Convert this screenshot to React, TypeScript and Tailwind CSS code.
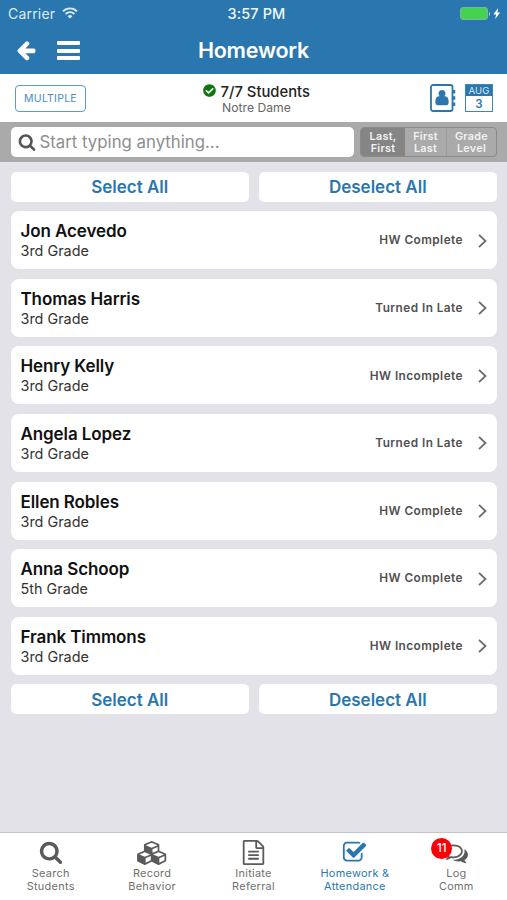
import type { ReactNode } from "react";
import clsx from "clsx";
import { FaCheckCircle } from "react-icons/fa";

const STUDENTS = [
  { name: "Jon Acevedo", grade: "3rd Grade", status: "HW Complete" },
  { name: "Thomas Harris", grade: "3rd Grade", status: "Turned In Late" },
  { name: "Henry Kelly", grade: "3rd Grade", status: "HW Incomplete" },
  { name: "Angela Lopez", grade: "3rd Grade", status: "Turned In Late" },
  { name: "Ellen Robles", grade: "3rd Grade", status: "HW Complete" },
  { name: "Anna Schoop", grade: "5th Grade", status: "HW Complete" },
  { name: "Frank Timmons", grade: "3rd Grade", status: "HW Incomplete" },
];

const SORTS = [
  ["Last,", "First"],
  ["First", "Last"],
  ["Grade", "Level"],
];

const PATHS = {
  back: "M1664 896v128q0 53-32.5 90.5t-84.5 37.5h-704l293 294q38 36 38 90t-38 90l-75 76q-37 37-90 37-52 0-91-37l-651-652q-37-37-37-90 0-52 37-91l651-650q38-38 91-38 52 0 90 38l75 74q38 38 38 91t-38 91l-293 293h704q52 0 84.5 37.5t32.5 90.5z",
  search:
    "M1216 832q0-185-131.5-316.5t-316.5-131.5-316.5 131.5-131.5 316.5 131.5 316.5 316.5 131.5 316.5-131.5 131.5-316.5zm512 832q0 52-38 90t-90 38q-54 0-90-38l-343-342q-179 124-399 124-143 0-273.5-55.5t-225-150-150-225-55.5-273.5 55.5-273.5 150-225 225-150 273.5-55.5 273.5 55.5 225 150 150 225 55.5 273.5q0 220-124 399l343 343q37 37 37 90z",
  cubes:
    "M640 1632l384-192v-314l-384 164v342zm-64-454l404-173-404-173-404 173zm1088 454l384-192v-314l-384 164v342zm-64-454l404-173-404-173-404 173zm-448-293l384-165v-266l-384 164v267zm-64-379l441-189-441-189-441 189zm1088 518v416q0 36-19 67t-52 47l-448 224q-25 14-57 14t-57-14l-448-224q-4-2-7-4-2 2-7 4l-448 224q-25 14-57 14t-57-14l-448-224q-33-16-52-47t-19-67v-416q0-38 21.5-70t56.5-48l434-186v-400q0-38 21.5-70t56.5-48l448-192q23-10 50-10t50 10l448 192q35 16 56.5 48t21.5 70v400l434 186q36 16 57 48t21 70z",
  file: "M1596 380q28 28 48 76t20 88v1152q0 40-28 68t-68 28h-1344q-40 0-68-28t-28-68v-1600q0-40 28-68t68-28h896q40 0 88 20t76 48zm-444-244v376h376q-10-29-22-41l-313-313q-12-12-41-22zm384 1528v-1024h-416q-40 0-68-28t-28-68v-416h-768v1536h1280zm-1024-864q0-14 9-23t23-9h704q14 0 23 9t9 23v64q0 14-9 23t-23 9h-704q-14 0-23-9t-9-23v-64zm736 224q14 0 23 9t9 23v64q0 14-9 23t-23 9h-704q-14 0-23-9t-9-23v-64q0-14 9-23t23-9h704zm0 256q14 0 23 9t9 23v64q0 14-9 23t-23 9h-704q-14 0-23-9t-9-23v-64q0-14 9-23t23-9h704z",
  check:
    "M1472 930v318q0 119-84.5 203.5t-203.5 84.5h-832q-119 0-203.5-84.5t-84.5-203.5v-832q0-119 84.5-203.5t203.5-84.5h832q63 0 117 25 15 7 18 23 3 17-9 29l-49 49q-10 10-23 10-3 0-9-2-23-6-45-6h-832q-66 0-113 47t-47 113v832q0 66 47 113t113 47h832q66 0 113-47t47-113v-254q0-13 9-22l64-64q10-10 23-10 6 0 12 3 20 8 20 29zm231-489l-814 814q-24 24-57 24t-57-24l-430-430q-24-24-24-57t24-57l110-110q24-24 57-24t57 24l263 263 647-647q24-24 57-24t57 24l110 110q24 24 24 57t-24 57z",
  comments:
    "M704 384q-153 0-286 52t-211.5 141-78.5 191q0 82 53 158t149 132l97 56-35 84q34-20 62-39l44-31 53 10q78 14 153 14 153 0 286-52t211.5-141 78.5-191-78.5-191-211.5-141-286-52zm0-128q191 0 353.5 68.5t256.5 186.5 94 257-94 257-256.5 186.5-353.5 68.5q-86 0-176-16-124 88-278 128-36 9-86 16h-3q-11 0-20.5-8t-11.5-21q-1-3-1-6.5t.5-6.5 2-6l2.5-5 3.5-5.5 4-5 4.5-5 4-4.5q5-6 23-25t26-29.5 22.5-29 25-38.5 20.5-44q-124-72-195-177t-71-224q0-139 94-257t256.5-186.5 353.5-68.5zm822 1169q10 24 20.5 44t25 38.5 22.5 29 26 29.5 23 25q1 1 4 4.5t4.5 5 4 5 3.5 5.5l2.5 5 2 6 .5 6.5-1 6.5q-3 14-13 22t-22 7q-50-7-86-16-154-40-278-128-90 16-176 16-271 0-472-132 58 4 88 4 161 0 309-45t264-129q125-92 192-212t67-254q0-77-23-152 129 71 204 178t75 230q0 120-71 224.5t-195 176.5z",
};

function Icon({ name, className, viewBox = "0 0 1792 1792" }: { name: keyof typeof PATHS; className?: string; viewBox?: string }) {
  return (
    <svg viewBox={viewBox} fill="currentColor" className={clsx("shrink-0", className)}>
      <path d={PATHS[name]} />
    </svg>
  );
}

function StatusBar() {
  return (
    <div className="grid h-[27px] grid-cols-3 items-center pr-[6px] pl-[8px] text-[14px]">
      <div className="flex items-center gap-[7px] text-[#dcebf7]">
        <span className="tracking-[0.2px]">Carrier</span>
        <svg viewBox="0 0 16 12" className="mb-[2px] h-[12px] w-[16px]" fill="none" stroke="currentColor" strokeWidth="1.8">
          <path d="M1 4.3a10 10 0 0 1 14 0" />
          <path d="M3.6 7a6.3 6.3 0 0 1 8.8 0" />
          <path d="M5.6 9.2a3.5 3.5 0 0 1 4.8 0L8 11.6z" fill="currentColor" stroke="none" />
        </svg>
      </div>
      <span className="pl-[4px] text-center text-[14.5px] font-medium tracking-[0.1px] text-[#eef6fc]">3:57 PM</span>
      <div className="flex items-center justify-end">
        <span className="h-[13px] w-[28px] rounded-[3px] border border-[#7fb0a8] bg-[#43d351]" />
        <span className="ml-[1px] h-[4px] w-[1.5px] rounded-r bg-[#9cc4e0]" />
        <svg viewBox="0 0 8 12" className="ml-[3px] h-[11px] w-[7.5px]" fill="currentColor">
          <path d="M5.5 0 .3 7h3l-1 5 5.400-7.200h-3z" />
        </svg>
      </div>
    </div>
  );
}

function NavBar() {
  return (
    <div className="grid h-[47px] grid-cols-[1fr_auto_1fr] items-center">
      <div className="flex items-center gap-[20px] pl-[15px]">
        <Icon name="back" className="mb-[2px] size-[22px]" />
        <div className="flex flex-col gap-[3.5px]">
          <span className="h-[4px] w-[23px] rounded-[1px] bg-white" />
          <span className="h-[4px] w-[23px] rounded-[1px] bg-white" />
          <span className="h-[4px] w-[23px] rounded-[1px] bg-white" />
        </div>
      </div>
      <h1 className="text-[21.5px] font-semibold tracking-[-0.2px]">Homework</h1>
    </div>
  );
}

function ContactBook() {
  return (
    <svg viewBox="0 0 26 28" className="h-[28px] w-[26px] text-[#2977ae]" fill="none">
      <rect x="1" y="1" width="21.5" height="26" rx="2" stroke="currentColor" strokeWidth="1.8" />
      <path
        fill="currentColor"
        d="M12 6a3.700 3.700 0 0 1 2.500 6.300h.6c2.300.4 3.500 2.100 3.500 4.600v2.200q0 2.100-2 2.100H7.400q-2 0-2-2.100v-2.200c0-2.500 1.200-4.200 3.500-4.600h.6A3.700 3.700 0 0 1 12 6z"
      />
      <path stroke="currentColor" strokeWidth="2.500" d="M24 6v3.500M24 12.200v3.500M24 18.400v3.500" />
    </svg>
  );
}

function Toolbar() {
  return (
    <div className="grid h-[48px] grid-cols-[1fr_auto_1fr] items-center bg-white">
      <div className="pl-[15px]">
        <button className="flex h-[27px] w-[71px] items-center justify-center rounded-[4px] border-[1.5px] border-[#5b9bcb] pt-[2px] text-[10.5px] tracking-[0.25px] text-[#4a8dc0]">
          MULTIPLE
        </button>
      </div>
      <div className="flex flex-col items-center pl-[6px] text-center">
        <div className="flex items-center gap-[4.5px] text-[14.8px] leading-[17px] font-medium text-[#222]">
          <FaCheckCircle className="mb-[1px] size-[13px] text-[#0b780b]" />
          <span className="pt-[2px]">7/7 Students</span>
        </div>
        <div className="text-[12.2px] leading-[14px] text-[#666]">Notre Dame</div>
      </div>
      <div className="flex items-center justify-end gap-[9px] pr-[14px]">
        <ContactBook />
        <div className="flex h-[28px] w-[28px] flex-col border border-[#3f86b9] text-center">
          <span className="h-[11px] bg-[#2977ae] text-[9.5px] leading-[11px] tracking-[0.2px] text-[#d8e9f5]">AUG</span>
          <span className="text-[11.5px] leading-[16px] font-semibold text-[#2977ae]">3</span>
        </div>
      </div>
    </div>
  );
}

function SearchRow() {
  return (
    <div className="flex h-[40px] items-center bg-[#aaaaaa] pr-[10px] pl-[10.5px]">
      <div className="flex h-[30px] w-[343px] items-center rounded-[5px] bg-white pl-[7px]">
        <Icon name="search" className="mb-[1px] size-[18px] text-[#555]" />
        <span className="ml-[4px] pt-[1px] text-[16.8px] text-[#8e8e8e]">Start typing anything...</span>
      </div>
      <div className="ml-auto flex h-[30px] w-[137px] overflow-hidden rounded-[4px] border border-[#8a8a8a] text-center text-[10.8px] leading-[12px] font-semibold tracking-[0.3px] text-[#f2f2f2]">
        {SORTS.map(([first, second], i) => (
          <div
            key={first}
            className={clsx(
              "flex flex-col justify-center pt-[1px]",
              i === 0 && "w-[44px] bg-[#858585]",
              i === 1 && "w-[42px] border-r border-[#9b9b9b]",
              i === 2 && "flex-1"
            )}
          >
            <span>{first}</span>
            <span>{second}</span>
          </div>
        ))}
      </div>
    </div>
  );
}

function SelectButtons() {
  return (
    <div className="grid grid-cols-2 gap-[9.5px] text-[17px] leading-[28px] font-semibold text-[#2977ae]">
      <button className="h-[30px] rounded-[5px] bg-white pt-[1px]">Select All</button>
      <button className="h-[30px] rounded-[5px] bg-white pt-[1px]">Deselect All</button>
    </div>
  );
}

function StudentCard({ name, grade, status }: (typeof STUDENTS)[number]) {
  return (
    <div className="flex h-[58px] items-center rounded-[8px] bg-white pr-[10px] pl-[10px]">
      <div className="pt-[2px]">
        <div className="text-[17px] leading-[20px] font-semibold tracking-[-0.1px] text-[#111]">{name}</div>
        <div className="text-[14.4px] leading-[20px] text-[#333]">{grade}</div>
      </div>
      <span className="ml-auto pt-[2px] text-[11.8px] font-semibold tracking-[0.45px] text-[#505050]">{status}</span>
      <svg viewBox="0 0 9 14" className="mt-[1px] ml-[15px] h-[14px] w-[9px]" fill="none" stroke="#6b6b6b" strokeWidth="1.8">
        <path d="M1 .8 7.5 7 1 13.2" />
      </svg>
    </div>
  );
}

function Tab({ icon, lines, active }: { icon: ReactNode; lines: string[]; active?: boolean }) {
  return (
    <div className={clsx("flex flex-1 flex-col items-center", active ? "text-[#2977ae]" : "text-[#5a5a5a]")}>
      <div className="flex h-[28px] items-center justify-center pb-[1px]">{icon}</div>
      <div className={clsx("text-center text-[10.9px] leading-[13px] tracking-[0.3px]", !active && "text-[#6f6f6f]")}>
        {lines.map((line) => (
          <div key={line}>{line}</div>
        ))}
      </div>
    </div>
  );
}

function TabBar() {
  return (
    <nav className="flex h-[68px] border-t border-[#c4c4c8] bg-white pt-[6px]">
      <Tab icon={<Icon name="search" className="mb-[1px] size-[24px]" />} lines={["Search", "Students"]} />
      <Tab icon={<Icon name="cubes" viewBox="0 0 2304 1792" className="h-[24px] w-[31px]" />} lines={["Record", "Behavior"]} />
      <Tab icon={<Icon name="file" className="size-[25px]" />} lines={["Initiate", "Referral"]} />
      <Tab active icon={<Icon name="check" className="size-[25px]" />} lines={["Homework &", "Attendance"]} />
      <Tab
        icon={
          <div className="relative">
            <Icon name="comments" className="size-[24px]" />
            <span className="absolute -top-[3px] -left-[13px] flex size-[21px] items-center justify-center rounded-full bg-[#fb0007] pt-[1px] text-[11.5px] font-medium text-white">
              11
            </span>
          </div>
        }
        lines={["Log", "Comm"]}
      />
    </nav>
  );
}

export default function App() {
  return (
    <div className="flex h-[900px] w-[507px] flex-col overflow-hidden bg-[#e3e2e9] font-[Inter,sans-serif]">
      <header className="bg-[#2977ae] text-white">
        <StatusBar />
        <NavBar />
      </header>
      <Toolbar />
      <SearchRow />
      <main className="flex flex-1 flex-col gap-[9.6px] pt-[9.6px] pr-[10px] pl-[10.5px]">
        <SelectButtons />
        {STUDENTS.map((student) => (
          <StudentCard key={student.name} {...student} />
        ))}
        <SelectButtons />
      </main>
      <TabBar />
    </div>
  );
}
